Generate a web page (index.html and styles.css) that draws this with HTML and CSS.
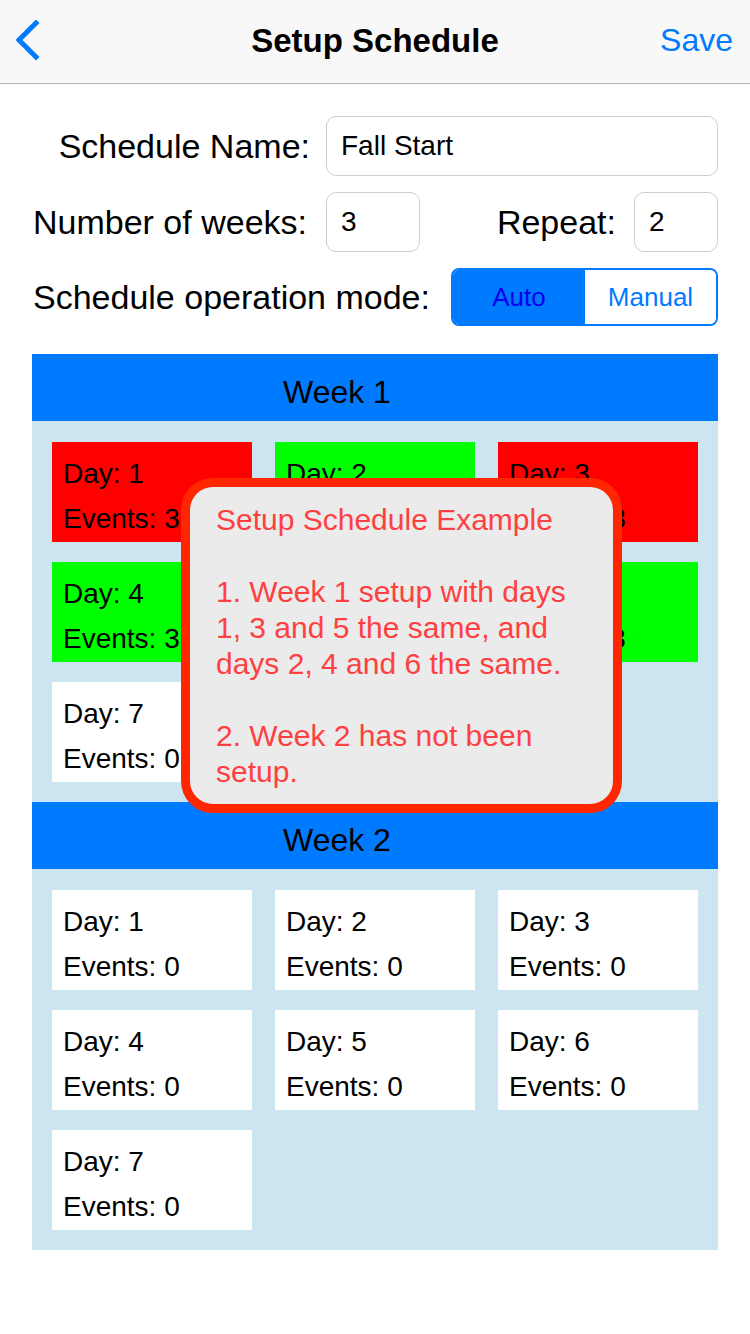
FILE: index.html
```html
<!DOCTYPE html>
<html>
<head>
<meta charset="utf-8">
<link rel="stylesheet" href="styles.css">
</head>
<body>
<div class="page">
  <header class="nav">
    <svg class="back" width="30" height="42" viewBox="0 0 30 42">
      <polyline points="22,3 5,20 22,37" fill="none" stroke="#007aff" stroke-width="5" stroke-linecap="square"/>
    </svg>
    <div class="title">Setup Schedule</div>
    <div class="save">Save</div>
  </header>

  <section class="form">
    <div class="row">
      <div class="label label-right">Schedule Name:</div>
      <div class="input input-wide">Fall Start</div>
    </div>
    <div class="row">
      <div class="label label-fixed">Number of weeks:</div>
      <div class="input input-weeks">3</div>
      <div class="spacer"></div>
      <div class="label">Repeat:</div>
      <div class="input input-repeat">2</div>
    </div>
    <div class="row">
      <div class="label">Schedule operation mode:</div>
      <div class="spacer"></div>
      <div class="segmented">
        <div class="seg seg-on">Auto</div>
        <div class="seg seg-off">Manual</div>
      </div>
    </div>
  </section>

  <section class="weeks">
    <div class="week">
      <div class="week-head">Week 1</div>
      <div class="days">
        <div class="day red"><div>Day: 1</div><div>Events: 3</div></div>
        <div class="day green"><div>Day: 2</div><div>Events: 3</div></div>
        <div class="day red"><div>Day: 3</div><div>Events: 3</div></div>
        <div class="day green"><div>Day: 4</div><div>Events: 3</div></div>
        <div class="day red"><div>Day: 5</div><div>Events: 3</div></div>
        <div class="day green"><div>Day: 6</div><div>Events: 3</div></div>
        <div class="day"><div>Day: 7</div><div>Events: 0</div></div>
      </div>
    </div>
    <div class="week">
      <div class="week-head">Week 2</div>
      <div class="days">
        <div class="day"><div>Day: 1</div><div>Events: 0</div></div>
        <div class="day"><div>Day: 2</div><div>Events: 0</div></div>
        <div class="day"><div>Day: 3</div><div>Events: 0</div></div>
        <div class="day"><div>Day: 4</div><div>Events: 0</div></div>
        <div class="day"><div>Day: 5</div><div>Events: 0</div></div>
        <div class="day"><div>Day: 6</div><div>Events: 0</div></div>
        <div class="day"><div>Day: 7</div><div>Events: 0</div></div>
      </div>
    </div>
  </section>

  <div class="popup">
    <p>Setup Schedule Example</p>
    <p class="gap">1. Week 1 setup with days<br>1, 3 and 5 the same, and<br>days 2, 4 and 6 the same.</p>
    <p class="gap">2. Week 2 has not been<br>setup.</p>
  </div>
</div>
</body>
</html>
```

FILE: styles.css
```css
* { box-sizing: border-box; }
html, body { margin: 0; padding: 0; background: #fff; }
body {
  font-family: "Liberation Sans", Arial, sans-serif;
  color: #000;
  width: 750px;
  height: 1334px;
  overflow: hidden;
}
.page { position: relative; width: 750px; height: 1334px; }

.nav {
  height: 84px;
  background: #f8f8f8;
  border-bottom: 1px solid #b2b2b2;
  display: flex;
  align-items: center;
  justify-content: space-between;
  padding: 0 17px 2px 14px;
  position: relative;
}
.back { display: block; }
.title {
  position: absolute;
  left: 0; right: 0;
  top: 22px;
  text-align: center;
  font-size: 33px;
  font-weight: bold;
  pointer-events: none;
}
.save { color: #007aff; font-size: 32px; }

.form { padding: 32px 32px 0 33px; display: flex; flex-direction: column; gap: 16px; }
.row { display: flex; align-items: center; }
.label { font-size: 34px; white-space: nowrap; }
.label-right { width: 277px; text-align: right; margin-right: 16px; }
.label-fixed { width: 277px; margin-right: 16px; }
.spacer { flex: 1; }
.input {
  height: 60px;
  border: 1px solid #cfcfcf;
  border-radius: 10px;
  font-size: 28px;
  padding-left: 14px;
  display: flex;
  align-items: center;
}
.input-wide { flex: 1; }
.input-weeks { width: 94px; }
.input-repeat { width: 84px; margin-left: 18px; }

.segmented {
  width: 267px;
  height: 58px;
  border: 2px solid #007aff;
  border-radius: 8px;
  display: flex;
  overflow: hidden;
}
.seg {
  display: flex;
  align-items: center;
  justify-content: center;
  font-size: 26px;
}
.seg-on { width: 132px; background: #007aff; color: #0a00f0; }
.seg-off { flex: 1; background: #fff; color: #007aff; }

.weeks { margin: 28px 32px 0 32px; }
.week-head {
  height: 67px;
  background: #007aff;
  font-size: 32px;
  padding: 20px 0 0 251px;
}
.days {
  background: #cbe6f1;
  padding: 21px 20px 20px 20px;
  display: grid;
  grid-template-columns: 200px 200px 200px;
  column-gap: 23px;
  row-gap: 20px;
}
.day {
  height: 100px;
  background: #fff;
  font-size: 28px;
  line-height: 45px;
  padding: 9px 0 0 11px;
}
.day.red { background: #ff0000; }
.day.green { background: #00ff00; }

.popup {
  position: absolute;
  left: 181px;
  top: 478px;
  width: 441px;
  height: 335px;
  background: #ebebeb;
  border: 9px solid #ff2600;
  border-radius: 32px;
  padding: 15px 10px 0 26px;
  color: #ff4040;
  font-size: 30px;
  line-height: 36px;
  white-space: nowrap;
}
.popup p { margin: 0; }
.popup p.gap { margin-top: 36px; }
```
